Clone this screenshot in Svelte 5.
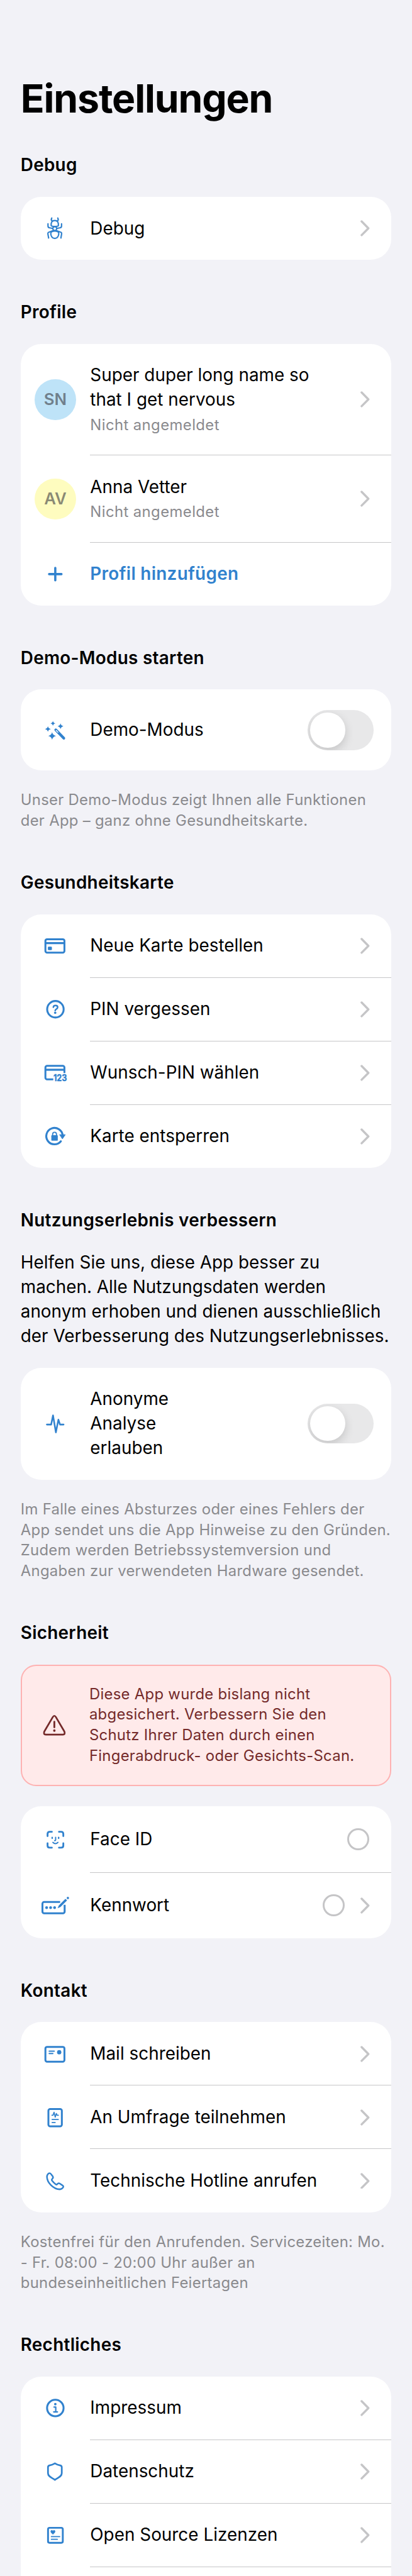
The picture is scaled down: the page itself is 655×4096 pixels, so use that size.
<script>
  const sections = [
    { title: 'Debug', rows: [{ icon: 'bug', label: ['Debug'], end: 'chevron' }] },
    {
      title: 'Profile',
      rows: [
        { initials: 'SN', tone: 'blue', label: ['Super duper long name so', 'that I get nervous'], sub: 'Nicht angemeldet', end: 'chevron' },
        { initials: 'AV', tone: 'yellow', label: ['Anna Vetter'], sub: 'Nicht angemeldet', end: 'chevron' },
        { icon: 'plus', label: ['Profil hinzufügen'], action: true }
      ]
    },
    {
      title: 'Demo-Modus starten',
      rows: [{ icon: 'wand', label: ['Demo-Modus'], end: 'toggle' }],
      note: ['Unser Demo-Modus zeigt Ihnen alle Funktionen', 'der App – ganz ohne Gesundheitskarte.']
    },
    {
      title: 'Gesundheitskarte',
      rows: [
        { icon: 'card', label: ['Neue Karte bestellen'], end: 'chevron' },
        { icon: 'question', label: ['PIN vergessen'], end: 'chevron' },
        { icon: 'cardPin', label: ['Wunsch-PIN wählen'], end: 'chevron' },
        { icon: 'unlock', label: ['Karte entsperren'], end: 'chevron' }
      ]
    },
    {
      title: 'Nutzungserlebnis verbessern',
      intro: [
        'Helfen Sie uns, diese App besser zu',
        'machen. Alle Nutzungsdaten werden',
        'anonym erhoben und dienen ausschließlich',
        'der Verbesserung des Nutzungserlebnisses.'
      ],
      rows: [{ icon: 'pulse', label: ['Anonyme', 'Analyse', 'erlauben'], end: 'toggle' }],
      note: [
        'Im Falle eines Absturzes oder eines Fehlers der',
        'App sendet uns die App Hinweise zu den Gründen.',
        'Zudem werden Betriebssystemversion und',
        'Angaben zur verwendeten Hardware gesendet.'
      ]
    },
    {
      title: 'Sicherheit',
      alert: [
        'Diese App wurde bislang nicht',
        'abgesichert. Verbessern Sie den',
        'Schutz Ihrer Daten durch einen',
        'Fingerabdruck- oder Gesichts-Scan.'
      ],
      rows: [
        { icon: 'face', label: ['Face ID'], end: 'radio' },
        { icon: 'password', label: ['Kennwort'], end: 'radioChevron' }
      ]
    },
    {
      title: 'Kontakt',
      rows: [
        { icon: 'mail', label: ['Mail schreiben'], end: 'chevron' },
        { icon: 'survey', label: ['An Umfrage teilnehmen'], end: 'chevron' },
        { icon: 'phone', label: ['Technische Hotline anrufen'], end: 'chevron' }
      ],
      note: [
        'Kostenfrei für den Anrufenden. Servicezeiten: Mo.',
        '- Fr. 08:00 - 20:00 Uhr außer an',
        'bundeseinheitlichen Feiertagen'
      ]
    },
    {
      title: 'Rechtliches',
      open: true,
      rows: [
        { icon: 'info', label: ['Impressum'], end: 'chevron' },
        { icon: 'shield', label: ['Datenschutz'], end: 'chevron' },
        { icon: 'license', label: ['Open Source Lizenzen'], end: 'chevron' }
      ]
    }
  ];

  // Four-pointed sparkle centred on (x, y) with radius r.
  const star = (x, y, r) => {
    const k = r * 0.2;
    return `M${x} ${y - r}Q${x + k * 0.6} ${y - k} ${x + r} ${y}Q${x + k * 0.6} ${y + k} ${x} ${y + r}Q${x - k * 0.6} ${y + k} ${x - r} ${y}Q${x - k * 0.6} ${y - k} ${x} ${y - r}Z`;
  };
</script>

{#snippet lines(list)}
  {#each list as line}<span class="line">{line}</span>{/each}
{/snippet}

{#snippet icon(name)}
  <svg class="icon" viewBox="0 0 96 96" fill="none" stroke="currentColor" stroke-linecap="round" stroke-linejoin="round">
    {#if name === 'bug'}
      <g stroke-width="3.2">
        <path d="M41 31.5C38.3 29.5 38.5 27 40 24.5M53 31.5C55.700 29.500 55.500 27 54 24.500" />
        <path d="M38.500 41.500C38 34.500 41 30.300 47 30.300S56 34.500 55.500 41.500C55.300 43.500 52 44 47 44S38.700 43.500 38.500 41.500Z" />
        <circle cx="47" cy="49" r="4.500" />
        <path d="M39.800 56.300C43.500 54.800 50.500 54.800 54.200 56.300C57.500 58 56.500 64 54.300 67.800C50.800 73.300 43.200 73.300 39.700 67.800C37.500 64 36.500 58 39.800 56.300Z" />
        <path d="M31.200 38V43Q31.200 47 35 47.300L42.500 48.800M62.800 38V43Q62.800 47 59 47.300L51.500 48.800" />
        <path d="M32.700 71L31 61.500Q30.500 58 34 57.200L43 54M61.300 71L63 61.500Q63.500 58 60 57.200L51 54" />
      </g>
    {:else if name === 'plus'}
      <path stroke-width="5.200" d="M33.800 48.200H62.600M48.200 33.800V62.600" />
    {:else if name === 'wand'}
      <g fill="currentColor" stroke="none">
        <path d={star(42.7, 32.7, 5.8)} />
        <path d={star(60.4, 39.2, 6.8)} />
        <path d={star(31, 45.7, 6.8)} />
        <path d={star(40.8, 61.8, 9)} />
      </g>
      <path stroke-width="6.400" d="M49.300 47.700L68 67.200" />
      <path class="slot" stroke-width="2" d="M50.300 49L54.500 53.300" />
    {:else if name === 'card'}
      <rect x="25.200" y="32.800" width="44.300" height="31.400" rx="4" stroke-width="4.400" />
      <path stroke-width="4.800" stroke-linecap="butt" d="M26 41.800H69" />
      <rect x="31" y="50.100" width="9.300" height="8.300" rx="2" fill="currentColor" stroke="none" />
    {:else if name === 'question'}
      <circle cx="48.500" cy="48" r="19.200" stroke-width="4.500" />
      <path stroke-width="3.700" d="M43.700 43.200C43.900 40.600 45.900 39.100 48.700 39.100C51.600 39.100 53.700 40.700 53.700 43.200C53.700 45.400 52.400 46.500 50.700 47.600C48.900 48.800 48.200 49.500 48 51" />
      <circle cx="48" cy="56.200" r="2.700" fill="currentColor" stroke="none" />
    {:else if name === 'cardPin'}
      <path stroke-width="4.400" stroke-linecap="butt" d="M43.500 63.200H29.200A4 4 0 0 1 25.200 59.200V36A4 4 0 0 1 29.200 32H65.500A4 4 0 0 1 69.500 36V48.900" />
      <path stroke-width="4.800" stroke-linecap="butt" d="M26 41H69" />
      <text x="43.800" y="66.900" textLength="31.500" lengthAdjust="spacingAndGlyphs">123</text>
    {:else if name === 'unlock'}
      <path stroke-width="4.600" d="M61.200 59.600A19.100 19.100 0 1 1 65.300 45.500" />
      <path fill="currentColor" stroke-width="1.400" d="M58.700 44.300H71.500L65.100 53.700Z" />
      <rect x="39" y="45.600" width="15" height="12.800" rx="1.800" fill="currentColor" stroke="none" />
      <path stroke-width="2.700" stroke-linecap="butt" d="M42 46.500V43.500C42 37 51 37 51 43.500V46.500" />
    {:else if name === 'pulse'}
      <path stroke-width="3.800" d="M28.600 50H38.600L42.900 28.500L49.600 68.300L55.500 38.500L59.200 50H67.500" />
    {:else if name === 'warning'}
      <path stroke-width="4" d="M42.500 29.500Q46 24 49.500 29.500L69.400 63.300Q72 70.500 66 70.500H26Q20 70.500 22.600 63.300Z" />
      <path stroke-width="4.200" d="M46 40.600V53.600" />
      <circle cx="46" cy="61.200" r="2.800" fill="currentColor" stroke="none" />
    {:else if name === 'face'}
      <path stroke-width="4.200" d="M30.200 40.300V35.200Q30.200 30.300 35.200 30.300H40.200M56.800 30.300H61.800Q66.900 30.300 66.900 35.200V40.300M66.900 57.200V62.300Q66.900 67.300 61.800 67.300H56.800M40.200 67.300H35.200Q30.200 67.300 30.200 62.300V57.200" />
      <path stroke-width="3.400" d="M41 43.300V45.600M56 43.300V45.600" />
      <path stroke-width="2.800" d="M49 43V49.300Q49 51 46.700 51M42.600 55Q48.500 60.700 54.400 55" />
    {:else if name === 'password'}
      <path stroke-width="4.500" stroke-linecap="butt" d="M59.500 39.800H22.300A4 4 0 0 0 18.300 43.800V62.200A4 4 0 0 0 22.300 66.200H66A4 4 0 0 0 70 62.200V46.500" />
      <g fill="currentColor" stroke="none">
        <circle cx="28" cy="53.200" r="3.200" />
        <circle cx="37.300" cy="53.200" r="3.200" />
        <circle cx="46.600" cy="53.200" r="3.200" />
        <path d="M53.500 54.700L56.500 47.900L71.800 32.600L75.700 36.400L60.300 51.700Z" />
        <circle cx="77.500" cy="30.600" r="2.700" />
      </g>
    {:else if name === 'mail'}
      <rect x="25.200" y="31.700" width="44.300" height="34.600" rx="4" stroke-width="4.400" />
      <path stroke-width="3" d="M34 41.900H45.700M34 47.200H42.500" />
      <circle cx="57.300" cy="44.200" r="5" fill="currentColor" stroke="none" />
    {:else if name === 'survey'}
      <rect x="32.200" y="28.700" width="31.300" height="40.300" rx="4" stroke-width="4.400" />
      <path stroke-width="2.500" d="M40.300 42.900H43L45.300 36L48 47.500L50.700 39L52.300 42.900H55.500M40.700 52.800H55.300M40.700 59.800H48" />
    {:else if name === 'phone'}
      <path stroke-width="3.700" d="M35 30C37 30 38 31.500 38.800 32.800L42.300 37.500C43.600 39.500 43 41.200 41.500 42.800L40.500 44C39.300 45.300 39.500 46 40.500 47.300C43 50.500 46 53.500 49.300 56C50.600 57 51.500 57 52.500 55.900L53.600 54.800C55.200 53.200 56.800 53 58.600 54.200L64.500 58C66.200 59 67 60 67 61.300C66.600 64.500 62.500 67.600 58.500 67.600C44 67.500 29 52 28.800 38.500C28.700 34 32 30 35 30Z" />
    {:else if name === 'info'}
      <circle cx="48.300" cy="48.200" r="19.200" stroke-width="4.500" />
      <circle cx="48.300" cy="39.200" r="2.900" fill="currentColor" stroke="none" />
      <path stroke-width="3.200" d="M45.300 46H49.300V57.300M44.500 57.300H53.300" />
    {:else if name === 'shield'}
      <path stroke-width="4" d="M47.300 29.200Q53 32.800 59.500 33.900Q63.300 34.800 63.300 38V52C63.300 60.500 53 63.200 47.300 67.500C41.500 63.200 31.200 60.500 31.200 52V38Q31.200 34.800 35 33.900Q41.500 32.800 47.300 29.200Z" />
    {:else if name === 'license'}
      <rect x="31.300" y="31.300" width="34.400" height="34.900" rx="3.500" stroke-width="4.300" />
      <path fill="currentColor" stroke-width=".8" d="M42.700 46.200C39.500 43.800 37.600 42 37.600 39.800C37.600 36.600 41.500 36.200 42.700 38.800C43.900 36.200 47.800 36.600 47.800 39.800C47.800 42 45.900 43.800 42.700 46.200Z" />
      <path stroke-width="2.500" d="M39 51.900H58.600M39 58.200H53" />
    {/if}
  </svg>
{/snippet}

{#snippet chevron()}
  <svg class="chevron" viewBox="0 0 22 38" fill="none" stroke="currentColor" stroke-linecap="round" stroke-linejoin="round">
    <path stroke-width="5" d="M2.800 3L18.600 19L2.800 35" />
  </svg>
{/snippet}

<main>
  <h1>Einstellungen</h1>
  {#each sections as section}
    <section class:noted={section.note}>
      <h2>{section.title}</h2>
      {#if section.intro}<p class="intro">{@render lines(section.intro)}</p>{/if}
      {#if section.alert}
        <div class="alert">
          {@render icon('warning')}
          <p>{@render lines(section.alert)}</p>
        </div>
      {/if}
      <div class="card" class:open={section.open}>
        {#each section.rows as row}
          <div class="row" class:tall={row.end === 'radio' || row.end === 'radioChevron'} class:switch={row.end === 'toggle'}>
            {#if row.initials}
              <span class="avatar {row.tone}">{row.initials}</span>
            {:else}
              {@render icon(row.icon)}
            {/if}
            <div class="body">
              <div class="text">
                <div class="label" class:action={row.action}>{@render lines(row.label)}</div>
                {#if row.sub}<div class="sub">{row.sub}</div>{/if}
              </div>
              {#if row.end === 'toggle'}
                <span class="toggle"><span class="knob"></span></span>
              {/if}
              {#if row.end === 'radio' || row.end === 'radioChevron'}
                <span class="radio"></span>
              {/if}
              {#if row.end === 'chevron' || row.end === 'radioChevron'}
                {@render chevron()}
              {/if}
            </div>
          </div>
        {/each}
      </div>
      {#if section.note}<p class="note">{@render lines(section.note)}</p>{/if}
    </section>
  {/each}
</main>

<style>
  :global(html) { font-size: 68.25px; }
  :global(body) { background: #f2f2f7; }

  main {
    box-sizing: border-box;
    width: 655px;
    height: 4096px;
    overflow: hidden;
    padding: 1.73rem .48rem 0;
    background: #f2f2f7;
    color: #000;
    font-family: Inter, 'Liberation Sans', sans-serif;
    font-size: .408rem;
    line-height: .57rem;
    letter-spacing: .001em;
  }

  h1, h2, p { margin: 0; }
  .line { display: block; white-space: nowrap; }

  h1 {
    font-size: .915rem;
    line-height: 1.14rem;
    font-weight: 700;
    letter-spacing: -.018em;
  }

  section { padding-top: .936rem; }
  h1 + section { padding-top: .695rem; }
  section.noted + section { padding-top: .91rem; }

  h2 {
    margin-bottom: .45rem;
    font-size: .408rem;
    line-height: .57rem;
    font-weight: 600;
    letter-spacing: .011em;
  }

  .intro { margin: -.03rem 0 .45rem; }

  .note {
    margin-top: .455rem;
    color: #8a8a8e;
    font-size: .35rem;
    line-height: .48rem;
    letter-spacing: .012em;
  }

  .alert {
    box-sizing: border-box;
    display: flex;
    align-items: center;
    gap: .31rem;
    height: 2.83rem;
    margin-bottom: .48rem;
    padding-left: .30rem;
    border: 2px solid #feb2b2;
    border-radius: .36rem;
    background: #ffeaea;
    color: #742a2a;
    font-size: .35rem;
    line-height: .48rem;
    letter-spacing: .012em;
  }

  .card {
    border-radius: .48rem;
    background: #fff;
    overflow: hidden;
  }
  .card.open { border-radius: .48rem .48rem 0 0; height: 6rem; }

  .row {
    display: flex;
    align-items: center;
    gap: .33rem;
    padding-left: .33rem;
  }

  .icon { flex: none; width: .96rem; height: .96rem; color: #3182ce; }
  .alert .icon { color: #742a2a; }
  .icon text {
    font: 700 21px Inter, sans-serif;
    letter-spacing: 0;
    fill: currentColor;
    stroke: currentColor;
    stroke-width: .6;
  }
  .slot { stroke: #fff; }

  .avatar {
    flex: none;
    display: grid;
    place-items: center;
    width: .96rem;
    height: .96rem;
    border-radius: 50%;
    color: rgba(60, 60, 67, .6);
    font-size: .378rem;
    font-weight: 600;
  }
  .blue { background: #bee3f8; }
  .yellow { background: #fefcbf; }

  .body {
    flex: 1;
    display: flex;
    align-items: center;
    padding: .45rem .50rem .445rem 0;
    border-bottom: 1px solid #c6c6c8;
  }
  .card:not(.open) .row:last-child .body { border-bottom: 0; padding-bottom: .45rem; }
  .tall .body { padding-top: .48rem; padding-bottom: .475rem; }
  .card:not(.open) .tall:last-child .body { padding-bottom: .48rem; }
  .switch .body {
    box-sizing: border-box;
    min-height: 1.89rem;
    padding-right: .42rem;
  }

  .text { flex: 1; }
  .action { color: #3182ce; font-weight: 600; letter-spacing: .011em; }
  .sub {
    margin-top: .07rem;
    color: #8a8a8e;
    font-size: .35rem;
    line-height: .48rem;
    letter-spacing: .017em;
  }

  .chevron { flex: none; width: .22rem; height: .38rem; color: #c5c5c7; }

  .radio {
    flex: none;
    box-sizing: border-box;
    width: .51rem;
    height: .51rem;
    margin: 0 .02rem 0 0;
    border: 3px solid #c5c5c7;
    border-radius: 50%;
  }
  .radio + .chevron { margin-left: .35rem; }

  .toggle {
    flex: none;
    box-sizing: border-box;
    width: 1.53rem;
    height: .93rem;
    padding: .06rem;
    border-radius: .465rem;
    background: #e8e8e9;
    overflow: hidden;
  }
  .knob {
    display: block;
    width: .81rem;
    height: .81rem;
    border-radius: 50%;
    background: #fff;
    box-shadow: 0 .08rem .22rem rgba(0, 0, 0, .16);
  }
</style>
